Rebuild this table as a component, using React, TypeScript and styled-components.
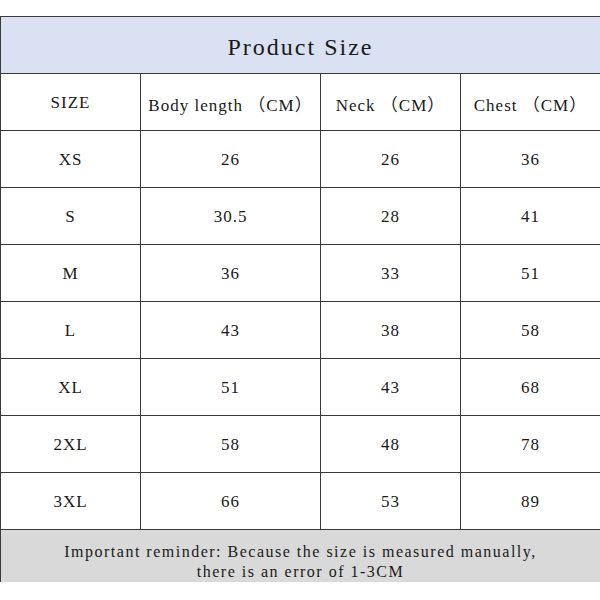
import React from "react";
import styled, { createGlobalStyle } from "styled-components";

const GlobalStyle = createGlobalStyle`
  html, body { margin: 0; padding: 0; background: #ffffff; }
  body { width: 600px; height: 600px; overflow: hidden; }
`;

const Page = styled.div`
  padding-top: 16px;
  width: 600px;
`;

const Chart = styled.div`
  display: grid;
  grid-template-columns: 139px 179px 139px 139px;
  grid-template-rows: repeat(9, 56px) 52px;
  gap: 1px;
  padding: 1px 1px 0 1px;
  background: #3a3a3a;
  width: 600px;
  box-sizing: border-box;
  font-family: "Liberation Serif", "Noto Sans CJK SC", serif;
  color: #1a1a1a;
`;

const Cell = styled.div`
  background: #ffffff;
  display: flex;
  align-items: center;
  justify-content: center;
  font-size: 17px;
  letter-spacing: 1px;
  white-space: nowrap;
  padding-top: 2px;
  box-sizing: border-box;
`;

const Title = styled(Cell)`
  grid-column: 1 / -1;
  background: #d9e1f2;
  font-size: 24px;
  letter-spacing: 2px;
  padding-top: 4px;
`;

const Footer = styled(Cell)`
  grid-column: 1 / -1;
  background: #d9d9d9;
  font-size: 16px;
  letter-spacing: 1.5px;
  line-height: 20px;
  flex-direction: column;
  padding-top: 12px;
`;

const headers = ["SIZE", "Body length （CM）", "Neck （CM）", "Chest （CM）"];

const rows: string[][] = [
  ["XS", "26", "26", "36"],
  ["S", "30.5", "28", "41"],
  ["M", "36", "33", "51"],
  ["L", "43", "38", "58"],
  ["XL", "51", "43", "68"],
  ["2XL", "58", "48", "78"],
  ["3XL", "66", "53", "89"],
];

export default function App() {
  return (
    <Page>
      <GlobalStyle />
      <Chart>
        <Title>Product Size</Title>
        {headers.map((h) => (
          <Cell key={h}>{h}</Cell>
        ))}
        {rows.map((r) =>
          r.map((v, i) => <Cell key={r[0] + "-" + i}>{v}</Cell>)
        )}
        <Footer>
          <span>Important reminder: Because the size is measured manually,</span>
          <span>there is an error of 1-3CM</span>
        </Footer>
      </Chart>
    </Page>
  );
}
